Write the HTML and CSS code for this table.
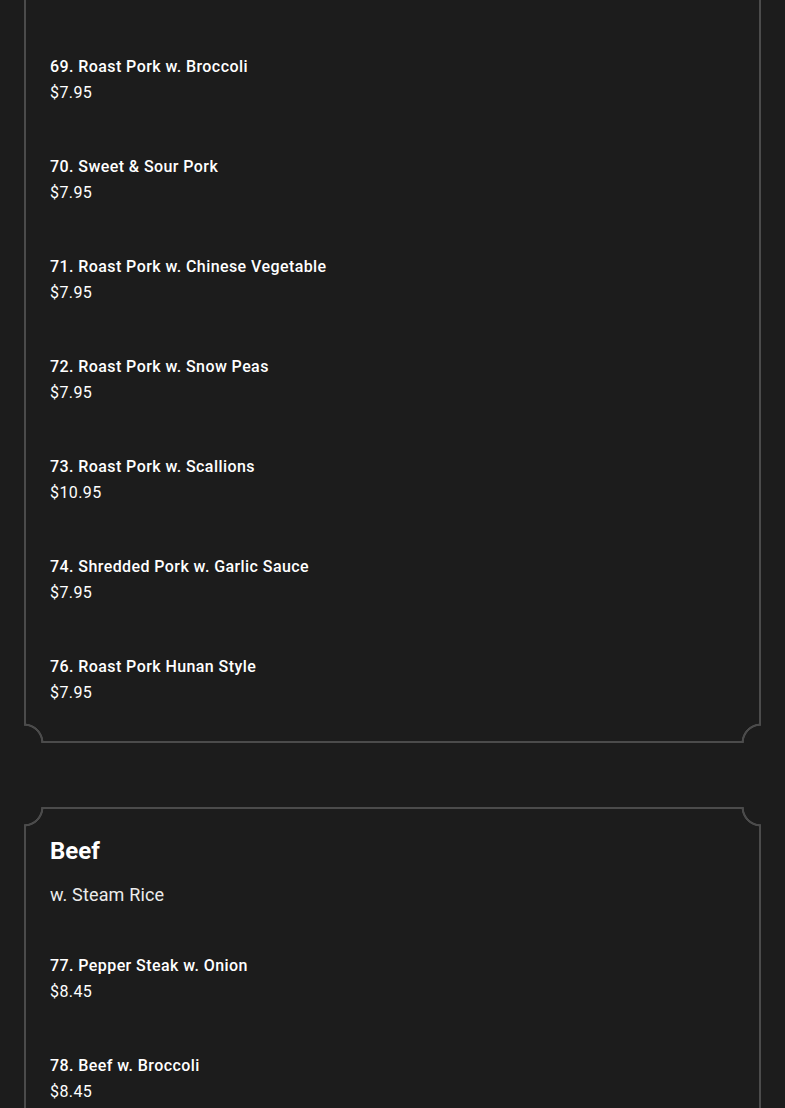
FILE: index.html
```html
<!DOCTYPE html>
<html lang="en">
<head>
<meta charset="utf-8">
<title>Menu</title>
<link rel="stylesheet" href="styles.css">
</head>
<body>
<main class="menu">
  <section class="card card-cut">
    <span class="corner corner-bl"></span>
    <span class="corner corner-br"></span>
    <ul class="items">
      <li class="item"><div class="item-name">69. Roast Pork w. Broccoli</div><div class="item-price">$7.95</div></li>
      <li class="item"><div class="item-name">70. Sweet &amp; Sour Pork</div><div class="item-price">$7.95</div></li>
      <li class="item"><div class="item-name">71. Roast Pork w. Chinese Vegetable</div><div class="item-price">$7.95</div></li>
      <li class="item"><div class="item-name">72. Roast Pork w. Snow Peas</div><div class="item-price">$7.95</div></li>
      <li class="item"><div class="item-name">73. Roast Pork w. Scallions</div><div class="item-price">$10.95</div></li>
      <li class="item"><div class="item-name">74. Shredded Pork w. Garlic Sauce</div><div class="item-price">$7.95</div></li>
      <li class="item"><div class="item-name">76. Roast Pork Hunan Style</div><div class="item-price">$7.95</div></li>
    </ul>
  </section>
  <section class="card">
    <span class="corner corner-tl"></span>
    <span class="corner corner-tr"></span>
    <span class="corner corner-bl"></span>
    <span class="corner corner-br"></span>
    <h2 class="card-title">Beef</h2>
    <p class="card-sub">w. Steam Rice</p>
    <ul class="items">
      <li class="item"><div class="item-name">77. Pepper Steak w. Onion</div><div class="item-price">$8.45</div></li>
      <li class="item"><div class="item-name">78. Beef w. Broccoli</div><div class="item-price">$8.45</div></li>
    </ul>
  </section>
</main>
</body>
</html>
```

FILE: styles.css
```css
* { box-sizing: border-box; }
html, body {
  margin: 0;
  padding: 0;
  background: #1c1c1c;
  color: #ffffff;
  font-family: Roboto, "Noto Sans", "Liberation Sans", sans-serif;
}
body { overflow: hidden; }
.menu {
  display: flex;
  flex-direction: column;
  gap: 64px;
  padding: 0 24px 40px;
}
.card {
  position: relative;
  border: 2px solid #4b4b4b;
  background: #1c1c1c;
  padding: 26px 24px 37px;
}
.card-cut {
  border-top: none;
  padding-top: 55px;
  padding-bottom: 36px;
}
.corner {
  position: absolute;
  width: 20px;
  height: 20px;
}
.corner-tl { top: -2px; left: -2px; background: radial-gradient(circle at 0 0, #1c1c1c 17px, #4b4b4b 17.6px, #4b4b4b 19.2px, transparent 19.8px); }
.corner-tr { top: -2px; right: -2px; background: radial-gradient(circle at 100% 0, #1c1c1c 17px, #4b4b4b 17.6px, #4b4b4b 19.2px, transparent 19.8px); }
.corner-bl { bottom: -2px; left: -2px; background: radial-gradient(circle at 0 100%, #1c1c1c 17px, #4b4b4b 17.6px, #4b4b4b 19.2px, transparent 19.8px); }
.corner-br { bottom: -2px; right: -2px; background: radial-gradient(circle at 100% 100%, #1c1c1c 17px, #4b4b4b 17.6px, #4b4b4b 19.2px, transparent 19.8px); }
.card-title {
  margin: 0;
  font-size: 24px;
  line-height: 32px;
  font-weight: 700;
}
.card-sub {
  margin: 15px 0 46px;
  font-size: 18px;
  line-height: 26px;
  font-weight: 400;
  letter-spacing: 0.15px;
  color: #ececec;
}
.items {
  list-style: none;
  margin: 0;
  padding: 0;
  display: flex;
  flex-direction: column;
  gap: 50px;
}
.item {
  display: flex;
  flex-direction: column;
  gap: 2px;
}
.item-name {
  font-size: 16px;
  line-height: 24px;
  font-weight: 500;
  letter-spacing: 0.42px;
}
.item-price {
  font-size: 16px;
  line-height: 24px;
  font-weight: 400;
  letter-spacing: 0.4px;
}
```
